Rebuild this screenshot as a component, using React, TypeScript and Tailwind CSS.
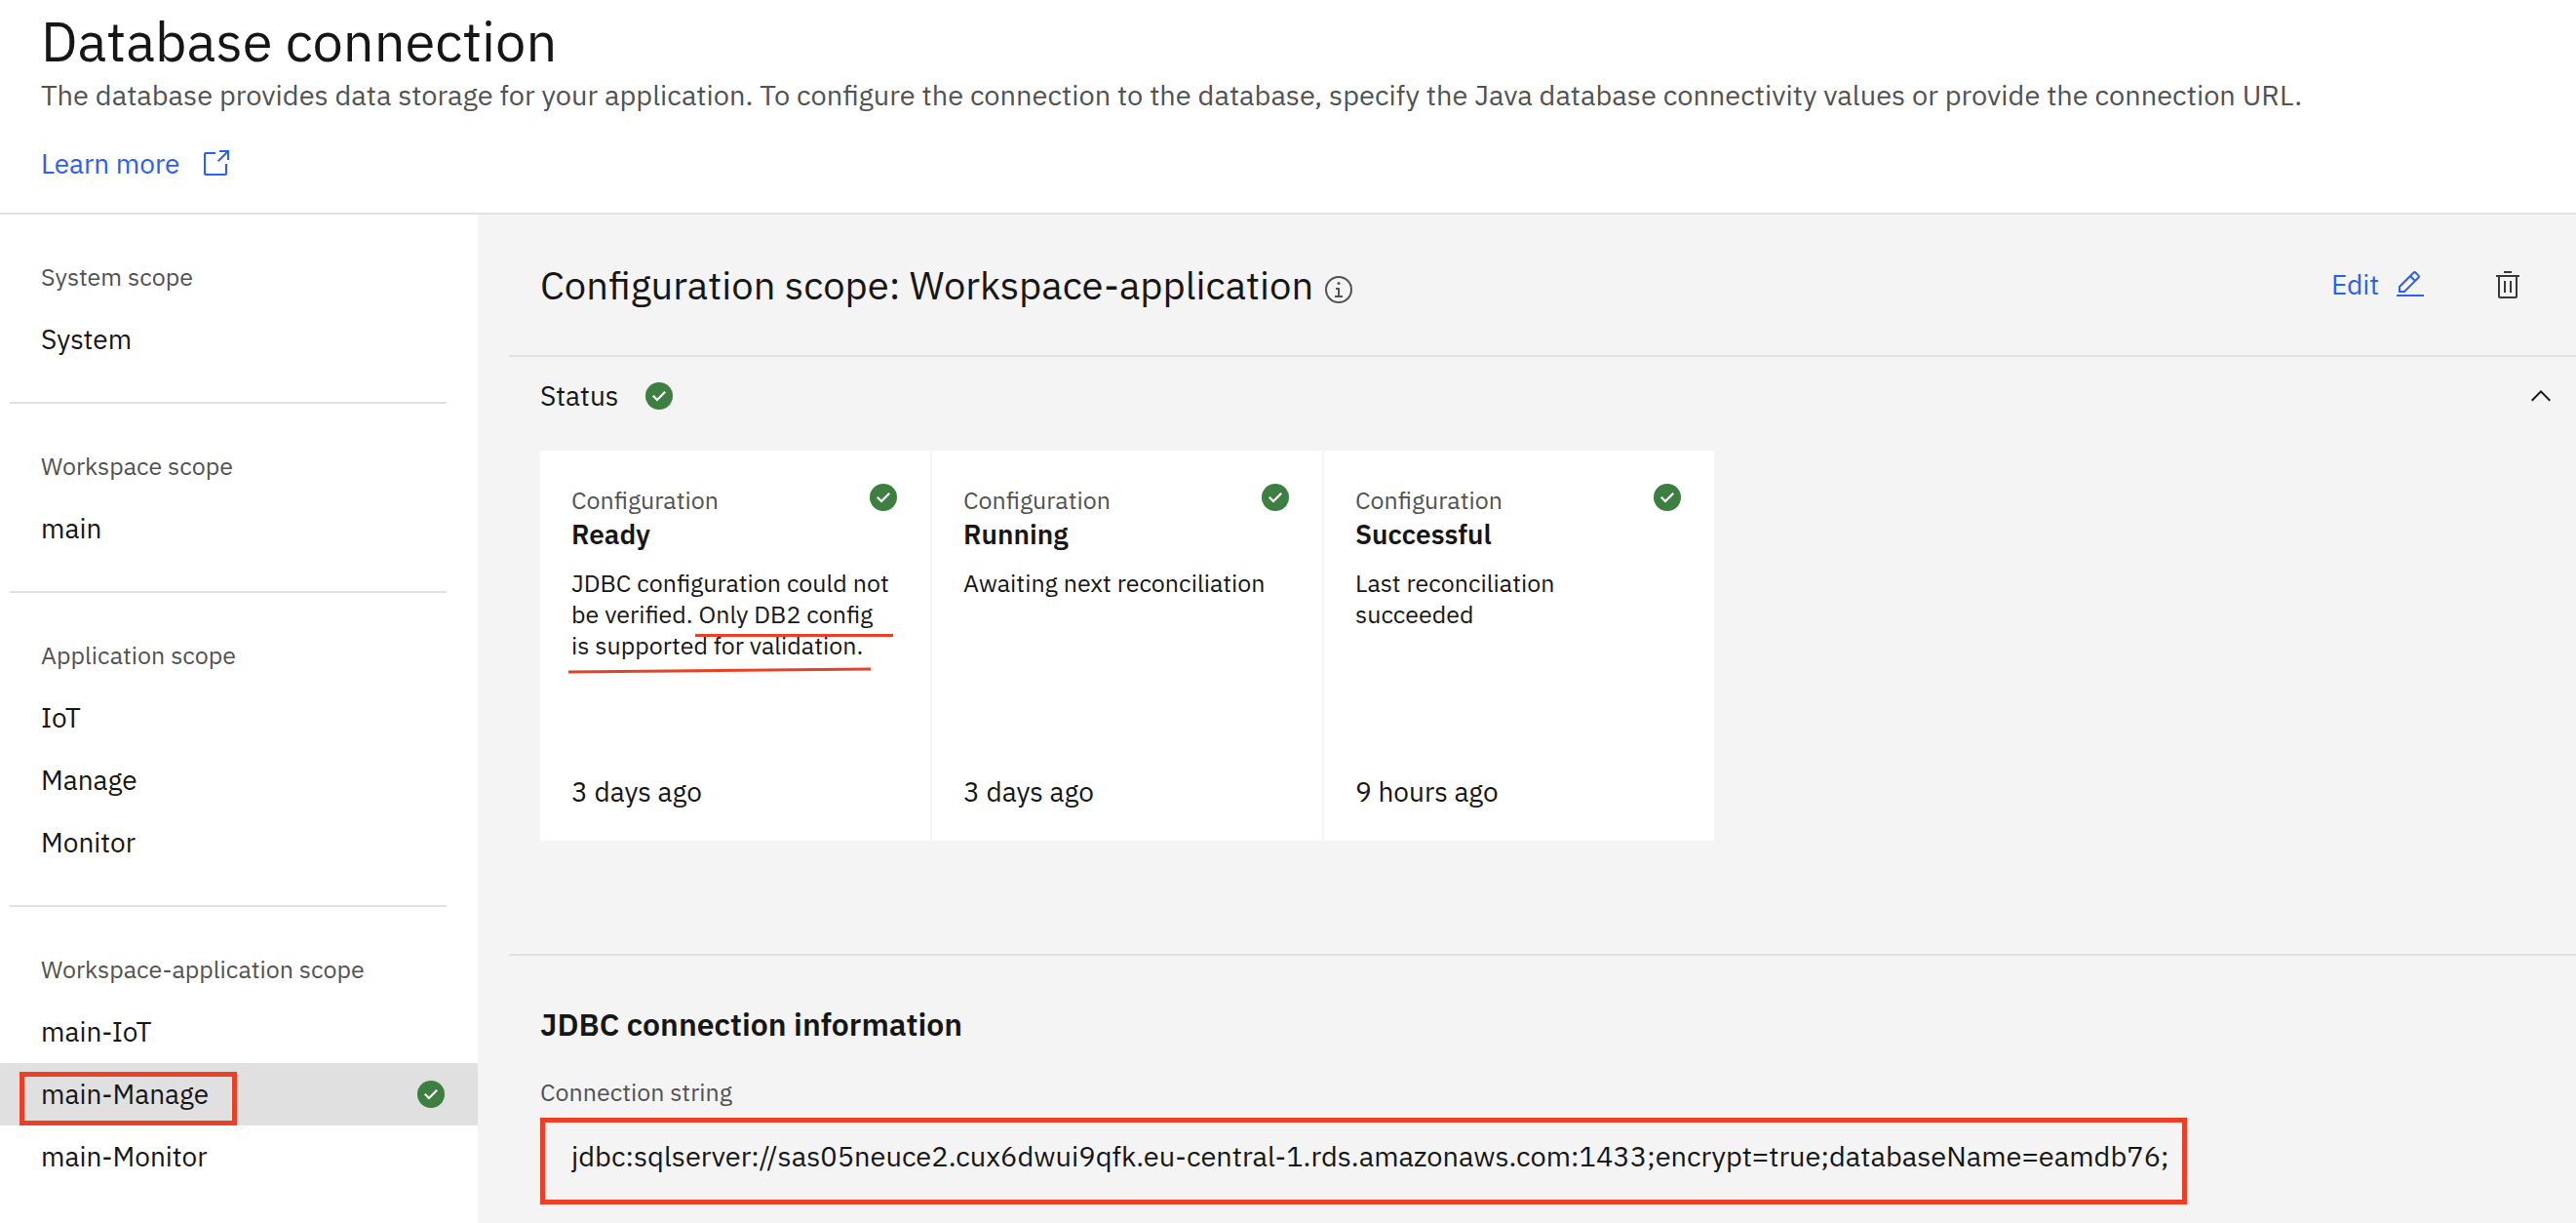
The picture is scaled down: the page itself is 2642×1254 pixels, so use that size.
import type { ReactNode } from 'react';

function Icon({ className = '', children }: { className?: string; children: ReactNode }) {
  return (
    <svg viewBox="0 0 32 32" fill="currentColor" aria-hidden="true" className={`size-8 shrink-0 ${className}`}>
      {children}
    </svg>
  );
}

function LaunchIcon() {
  return (
    <Icon>
      <path d="M26 28H6a2 2 0 0 1-2-2V6a2 2 0 0 1 2-2h10v2H6v20h20V16h2v10a2 2 0 0 1-2 2z" />
      <path d="M20 2v2h6.59L18 12.59 19.41 14 28 5.41V12h2V2z" />
    </Icon>
  );
}

function CheckIcon() {
  return (
    <Icon className="text-[#3d7f40]">
      <circle cx="16" cy="16" r="14" />
      <path fill="#fff" d="M14 21.59l-5-5L10.59 15 14 18.41 21.41 11 23 12.59z" />
    </Icon>
  );
}

function InfoIcon() {
  return (
    <Icon className="text-[#525252]">
      <path d="M17 22v-8h-4v2h2v6h-3v2h8v-2z" />
      <path d="M16 8a1.5 1.5 0 1 0 1.5 1.5A1.5 1.5 0 0 0 16 8z" />
      <path d="M16 30a14 14 0 1 1 14-14 14 14 0 0 1-14 14zm0-26a12 12 0 1 0 12 12A12 12 0 0 0 16 4z" />
    </Icon>
  );
}

function EditIcon() {
  return (
    <Icon>
      <path d="M2 26h28v2H2z" />
      <path d="M25.4 9c.8-.8.8-2 0-2.8l-3.6-3.6c-.8-.8-2-.8-2.8 0l-15 15V24h6.4zM20.4 4 24 7.6l-3 3L17.4 7zM6 22v-3.6l10-10 3.6 3.6-10 10z" />
    </Icon>
  );
}

function TrashIcon() {
  return (
    <Icon className="text-[#393939]">
      <path d="M12 12h2v12h-2zM18 12h2v12h-2z" />
      <path d="M4 6v2h2v20a2 2 0 0 0 2 2h16a2 2 0 0 0 2-2V8h2V6zm4 22V8h16v20z" />
      <path d="M12 2h8v2h-8z" />
    </Icon>
  );
}

function ChevronUpIcon() {
  return (
    <Icon>
      <path d="M16 10l10 10-1.4 1.4-8.6-8.6-8.6 8.6L6 20z" />
    </Icon>
  );
}

const scopes = [
  { label: 'System scope', items: ['System'] },
  { label: 'Workspace scope', items: ['main'] },
  { label: 'Application scope', items: ['IoT', 'Manage', 'Monitor'] },
  { label: 'Workspace-application scope', items: ['main-IoT', 'main-Manage', 'main-Monitor'] },
];
const selected = 'main-Manage';

function Sidebar() {
  return (
    <nav aria-label="Scopes" className="w-[490px] shrink-0 bg-white">
      {scopes.map((scope, i) => (
        <section key={scope.label}>
          {i > 0 && <hr className="mr-8 ml-2.5 border-t-2 border-[#e0e0e0]" />}
          <div className="py-8">
            <h2 className="px-[42px] text-[25px] leading-[64px] text-[#525252]">{scope.label}</h2>
            <ul>
              {scope.items.map((item) => (
                <li key={item}>
                  <a
                    href="#"
                    aria-current={item === selected ? 'page' : undefined}
                    className={`relative flex h-16 items-center justify-between pr-8 pl-[42px] ${item === selected ? 'bg-[#e0e0e0]' : ''}`}
                  >
                    {item}
                    {item === selected && (
                      <>
                        <CheckIcon />
                        <span className="absolute bottom-0 left-5 h-[55px] w-[223px] border-5 border-[#ea4025]" />
                      </>
                    )}
                  </a>
                </li>
              ))}
            </ul>
          </div>
        </section>
      ))}
    </nav>
  );
}

const cards = [
  {
    title: 'Ready',
    text: 'JDBC configuration could not be verified. Only DB2 config is supported for validation.',
    time: '3 days ago',
    marked: true,
  },
  { title: 'Running', text: 'Awaiting next reconciliation', time: '3 days ago', marked: false },
  { title: 'Successful', text: 'Last reconciliation succeeded', time: '9 hours ago', marked: false },
];

function StatusCard({ title, text, time, marked }: (typeof cards)[number]) {
  return (
    <article className="flex size-[400px] flex-col bg-white p-8">
      <div className="flex items-start justify-between">
        <div>
          <p className="text-[25px] leading-[38px] text-[#525252]">Configuration</p>
          <h3 className="leading-8 font-semibold">{title}</h3>
        </div>
        <CheckIcon />
      </div>
      <div className="relative mt-[18px]">
        <p className="max-w-[330px] text-[25px] leading-8">{text}</p>
        {marked && (
          <svg viewBox="0 0 340 120" className="absolute top-0 -left-1 h-[120px] w-[340px]" stroke="#ea4025" strokeWidth="3" aria-hidden="true">
            <path d="M131 69.5H334" />
            <path d="M1 107 311 104" />
          </svg>
        )}
      </div>
      <p className="mt-auto leading-9">{time}</p>
    </article>
  );
}

export default function App() {
  return (
    <div className="flex min-h-screen flex-col bg-white font-['IBM_Plex_Sans','Roboto',sans-serif] text-[28px] leading-10 text-[#161616]">
      <header className="border-b-2 border-[#e0e0e0] px-[42px] pt-2.5 pb-[34px]">
        <h1 className="text-[56px] leading-[64px]">Database connection</h1>
        <p className="text-[29px] leading-[46px] text-[#525252]">
          The database provides data storage for your application. To configure the connection to the database, specify
          the Java database connectivity values or provide the connection URL.
        </p>
        <a href="#" className="mt-8 flex w-fit items-center gap-5 leading-8 text-[#2b5ff6]">
          Learn more
          <LaunchIcon />
        </a>
      </header>

      <div className="flex grow">
        <Sidebar />
        <main className="min-w-0 grow bg-[#f4f4f4] pl-8">
          <div className="flex h-36 items-center pr-[54px] pl-8">
            <h2 className="text-[40px] leading-[52px]">Configuration scope: Workspace-application</h2>
            <button type="button" aria-label="Scope information" className="mt-2.5 ml-2.5">
              <InfoIcon />
            </button>
            <button type="button" className="ml-auto flex items-center gap-4 text-[#2b5ff6]">
              Edit
              <EditIcon />
            </button>
            <button type="button" aria-label="Delete" className="ml-[68px]">
              <TrashIcon />
            </button>
          </div>

          <section className="border-t-2 border-[#e0e0e0] pb-[116px]">
            <button type="button" aria-expanded="true" className="flex h-20 w-full items-center pr-5 pl-8">
              <span className="mr-[26px]">Status</span>
              <CheckIcon />
              <span className="ml-auto">
                <ChevronUpIcon />
              </span>
            </button>
            <div className="mt-4 flex flex-wrap gap-0.5 pl-8">
              {cards.map((card) => (
                <StatusCard key={card.title} {...card} />
              ))}
            </div>
          </section>

          <section className="border-t-2 border-[#e0e0e0] px-8 pt-12">
            <h2 className="text-[32px] leading-[44px] font-semibold">JDBC connection information</h2>
            <label htmlFor="connection-string" className="mt-8 block text-[25px] leading-8 text-[#525252]">
              Connection string
            </label>
            <div className="mt-2.5 w-[1689px] max-w-full border-5 border-[#ea4025] pb-[11px]">
              <input
                id="connection-string"
                readOnly
                value="jdbc:sqlserver://sas05neuce2.cux6dwui9qfk.eu-central-1.rds.amazonaws.com:1433;encrypt=true;databaseName=eamdb76;"
                className="block h-[68px] w-full bg-transparent pr-2 pl-[27px] text-[29px] outline-none"
              />
            </div>
          </section>
        </main>
      </div>
    </div>
  );
}
